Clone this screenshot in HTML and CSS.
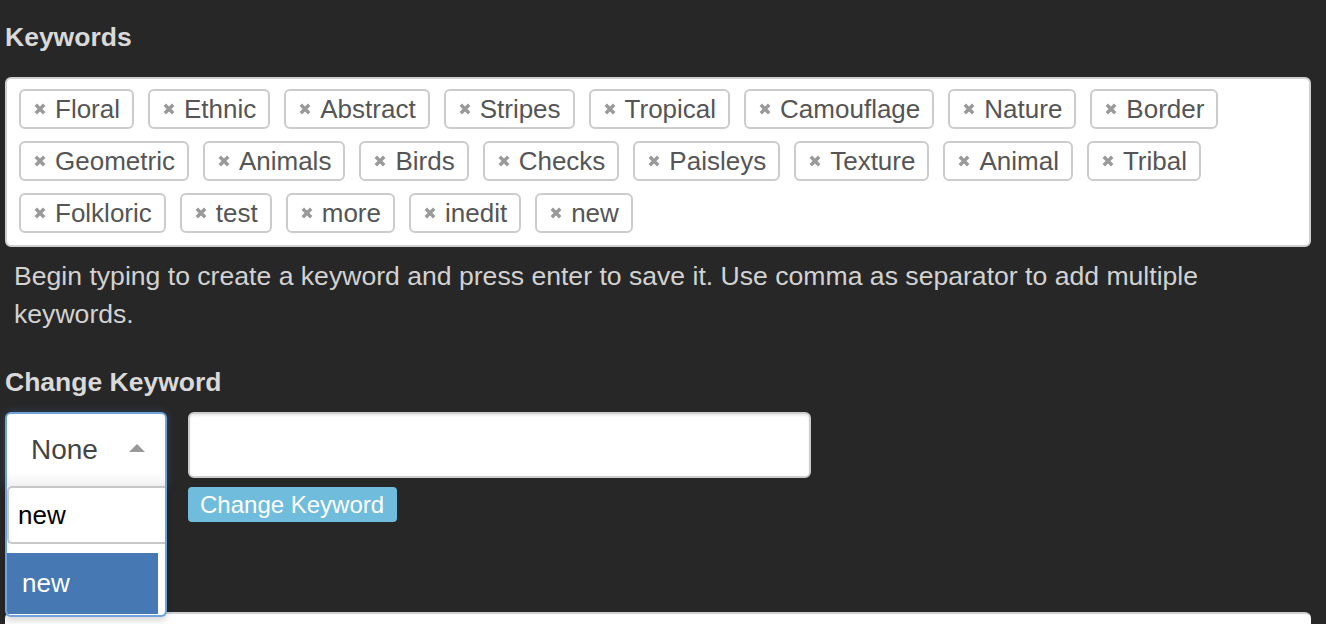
FILE: index.html
```html
<!DOCTYPE html>
<html>
<head>
<meta charset="utf-8">
<link rel="stylesheet" href="styles.css">
</head>
<body>
<div class="page">
  <h2 class="label">Keywords</h2>
  <div class="tagbox">
    <span class="tag"><svg class="x" viewBox="0 0 12 12"><path d="M1.8 1.8L10.2 10.2M10.2 1.8L1.8 10.2"/></svg>Floral</span>
    <span class="tag"><svg class="x" viewBox="0 0 12 12"><path d="M1.8 1.8L10.2 10.2M10.2 1.8L1.8 10.2"/></svg>Ethnic</span>
    <span class="tag"><svg class="x" viewBox="0 0 12 12"><path d="M1.8 1.8L10.2 10.2M10.2 1.8L1.8 10.2"/></svg>Abstract</span>
    <span class="tag"><svg class="x" viewBox="0 0 12 12"><path d="M1.8 1.8L10.2 10.2M10.2 1.8L1.8 10.2"/></svg>Stripes</span>
    <span class="tag"><svg class="x" viewBox="0 0 12 12"><path d="M1.8 1.8L10.2 10.2M10.2 1.8L1.8 10.2"/></svg>Tropical</span>
    <span class="tag"><svg class="x" viewBox="0 0 12 12"><path d="M1.8 1.8L10.2 10.2M10.2 1.8L1.8 10.2"/></svg>Camouflage</span>
    <span class="tag"><svg class="x" viewBox="0 0 12 12"><path d="M1.8 1.8L10.2 10.2M10.2 1.8L1.8 10.2"/></svg>Nature</span>
    <span class="tag"><svg class="x" viewBox="0 0 12 12"><path d="M1.8 1.8L10.2 10.2M10.2 1.8L1.8 10.2"/></svg>Border</span>
    <span class="tag"><svg class="x" viewBox="0 0 12 12"><path d="M1.8 1.8L10.2 10.2M10.2 1.8L1.8 10.2"/></svg>Geometric</span>
    <span class="tag"><svg class="x" viewBox="0 0 12 12"><path d="M1.8 1.8L10.2 10.2M10.2 1.8L1.8 10.2"/></svg>Animals</span>
    <span class="tag"><svg class="x" viewBox="0 0 12 12"><path d="M1.8 1.8L10.2 10.2M10.2 1.8L1.8 10.2"/></svg>Birds</span>
    <span class="tag"><svg class="x" viewBox="0 0 12 12"><path d="M1.8 1.8L10.2 10.2M10.2 1.8L1.8 10.2"/></svg>Checks</span>
    <span class="tag"><svg class="x" viewBox="0 0 12 12"><path d="M1.8 1.8L10.2 10.2M10.2 1.8L1.8 10.2"/></svg>Paisleys</span>
    <span class="tag"><svg class="x" viewBox="0 0 12 12"><path d="M1.8 1.8L10.2 10.2M10.2 1.8L1.8 10.2"/></svg>Texture</span>
    <span class="tag"><svg class="x" viewBox="0 0 12 12"><path d="M1.8 1.8L10.2 10.2M10.2 1.8L1.8 10.2"/></svg>Animal</span>
    <span class="tag"><svg class="x" viewBox="0 0 12 12"><path d="M1.8 1.8L10.2 10.2M10.2 1.8L1.8 10.2"/></svg>Tribal</span>
    <span class="tag"><svg class="x" viewBox="0 0 12 12"><path d="M1.8 1.8L10.2 10.2M10.2 1.8L1.8 10.2"/></svg>Folkloric</span>
    <span class="tag"><svg class="x" viewBox="0 0 12 12"><path d="M1.8 1.8L10.2 10.2M10.2 1.8L1.8 10.2"/></svg>test</span>
    <span class="tag"><svg class="x" viewBox="0 0 12 12"><path d="M1.8 1.8L10.2 10.2M10.2 1.8L1.8 10.2"/></svg>more</span>
    <span class="tag"><svg class="x" viewBox="0 0 12 12"><path d="M1.8 1.8L10.2 10.2M10.2 1.8L1.8 10.2"/></svg>inedit</span>
    <span class="tag"><svg class="x" viewBox="0 0 12 12"><path d="M1.8 1.8L10.2 10.2M10.2 1.8L1.8 10.2"/></svg>new</span>
  </div>
  <p class="help">Begin typing to create a keyword and press enter to save it. Use comma as separator to add multiple keywords.</p>

  <h2 class="label label2">Change Keyword</h2>
  <div class="row">
    <div class="select">
      <div class="single"><span>None</span><span class="arrow"></span></div>
      <div class="drop">
        <div class="search">new</div>
        <ul class="results"><li class="hl">new</li></ul>
      </div>
    </div>
    <div class="col">
      <div class="textin"></div>
      <div class="btn">Change Keyword</div>
    </div>
  </div>
  <div class="nextbox"></div>
</div>
</body>
</html>
```

FILE: styles.css
```css
html, body {
  margin: 0;
  padding: 0;
  background: #272727;
  overflow: hidden;
  height: 624px;
}
body {
  font-family: "Liberation Sans", Arial, Helvetica, sans-serif;
}
.page {
  width: 1306px;
  padding: 19px 0 0 5px;
}
.label {
  margin: 0;
  font-size: 26.5px;
  line-height: 36px;
  font-weight: bold;
  color: #d9d9d9;
}
.tagbox {
  margin-top: 22px;
  background: #fff;
  border: 2px solid #cfcfcf;
  border-radius: 6px;
  padding: 10px 12px 12px 12px;
  display: flex;
  flex-wrap: wrap;
  gap: 12px 14px;
}
.tag {
  box-sizing: border-box;
  height: 40px;
  display: flex;
  align-items: center;
  border: 2px solid #cccccc;
  border-radius: 6px;
  padding: 0 12px;
  font-size: 26px;
  color: #555;
}
.x {
  width: 12px;
  height: 12px;
  margin: 0 9px 0 1px;
  flex: none;
}
.x path {
  stroke: #9a9a9a;
  stroke-width: 3.4;
  fill: none;
}
.help {
  margin: 10px 0 0 0;
  max-width: 1240px;
  padding: 0 0 0 9px;
  font-size: 26.6px;
  line-height: 38px;
  color: #d2d2d2;
}
.label2 {
  margin-top: 31px;
}
.row {
  margin-top: 12px;
  display: flex;
  gap: 21px;
  align-items: flex-start;
}
.select {
  position: relative;
  width: 162px;
  flex: none;
}
.single {
  box-sizing: border-box;
  height: 74px;
  border: 2px solid #6fa3de;
  border-bottom: none;
  border-radius: 6px 6px 0 0;
  background: linear-gradient(#ffffff 80%, #f1f1f1);
  box-shadow: 0 0 10px rgba(80, 140, 220, 0.25);
  display: flex;
  align-items: center;
  padding: 0 20px 0 24px;
  justify-content: space-between;
  font-size: 28px;
  color: #444;
}
.arrow {
  width: 0;
  height: 0;
  border-left: 8px solid transparent;
  border-right: 8px solid transparent;
  border-bottom: 8px solid #999;
  margin-top: -4px;
}
.drop {
  position: absolute;
  left: 0;
  top: 74px;
  width: 162px;
  height: 131px;
  box-sizing: border-box;
  background: #fff;
  border: 2px solid #6fa3de;
  border-top: none;
  border-radius: 0 0 6px 6px;
  overflow: hidden;
  box-shadow: 0 4px 6px rgba(0, 0, 0, 0.15);
}
.search {
  box-sizing: border-box;
  height: 58px;
  margin-right: -4px;
  border: 2px solid #c8c8c8;
  border-right: none;
  border-radius: 5px 0 0 5px;
  padding-left: 9px;
  font-size: 26px;
  line-height: 54px;
  color: #000;
}
.results {
  list-style: none;
  margin: 9px 7px 0 0;
  padding: 0;
}
.hl {
  height: 61px;
  background: #4679b4;
  color: #fff;
  font-size: 26px;
  line-height: 60px;
  padding-left: 15px;
}
.col {
  display: flex;
  flex-direction: column;
  align-items: flex-start;
}
.textin {
  box-sizing: border-box;
  width: 623px;
  height: 66px;
  background: #fff;
  border: 2px solid #cccccc;
  border-radius: 6px;
  box-shadow: inset 0 2px 2px rgba(0, 0, 0, 0.08);
}
.btn {
  margin-top: 9px;
  height: 35px;
  box-sizing: border-box;
  padding: 0 13px 0 12px;
  background: #6fbcdc;
  border-radius: 4px;
  color: #fff;
  font-size: 24px;
  line-height: 35px;
}
.nextbox {
  margin-top: 90px;
  height: 40px;
  background: #fff;
  border-top: 2px solid #cfcfcf;
  border-radius: 6px 6px 0 0;
}
```
